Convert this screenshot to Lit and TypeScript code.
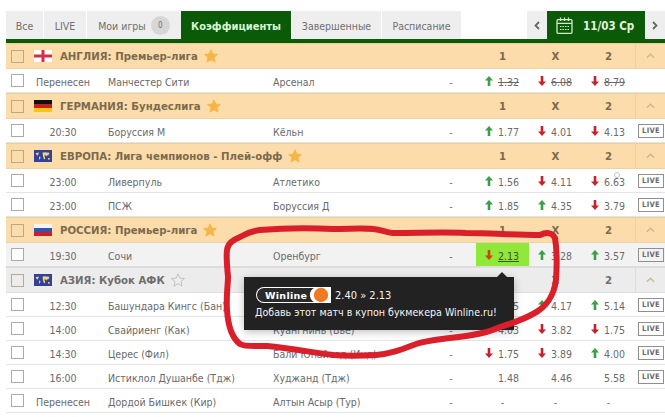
import { LitElement, html, css, svg } from "lit";
import { customElement } from "lit/decorators.js";

type Odd = [string, "u" | "d" | ""];
interface Row { kind: "h"; title: string; flag: string; grey?: boolean; emptyStar?: boolean }
interface Match { kind: "m"; time: string; home: string; away: string; dash: string; odds: [Odd, Odd, Odd]; live: boolean; strike?: boolean; grey?: boolean; hot?: boolean }

const rows: (Row | Match)[] = [
  { kind: "h", title: "АНГЛИЯ: Премьер-лига", flag: "en" },
  { kind: "m", time: "Перенесен", home: "Манчестер Сити", away: "Арсенал", dash: "-", odds: [["1.32", "u"], ["6.08", "d"], ["8.79", "d"]], live: false, strike: true },
  { kind: "h", title: "ГЕРМАНИЯ: Бундеслига", flag: "de" },
  { kind: "m", time: "20:30", home: "Боруссия М", away: "Кёльн", dash: "-", odds: [["1.77", "u"], ["4.01", "d"], ["4.13", "d"]], live: true },
  { kind: "h", title: "ЕВРОПА: Лига чемпионов - Плей-офф", flag: "eu" },
  { kind: "m", time: "23:00", home: "Ливерпуль", away: "Атлетико", dash: "-", odds: [["1.56", "u"], ["4.11", "d"], ["6.63", "d"]], live: true },
  { kind: "m", time: "23:00", home: "ПСЖ", away: "Боруссия Д", dash: "-", odds: [["1.85", "u"], ["4.35", "u"], ["3.79", "d"]], live: true },
  { kind: "h", title: "РОССИЯ: Премьер-лига", flag: "ru" },
  { kind: "m", time: "19:30", home: "Сочи", away: "Оренбург", dash: "-", odds: [["2.13", "d"], ["3.28", "u"], ["3.57", "u"]], live: true, grey: true, hot: true },
  { kind: "h", title: "АЗИЯ: Кубок АФК", flag: "eu", grey: true, emptyStar: true },
  { kind: "m", time: "12:30", home: "Башундара Кингс (Бан)", away: "", dash: "-", odds: [["1.75", "d"], ["4.17", "u"], ["5.14", "u"]], live: true },
  { kind: "m", time: "14:00", home: "Свайриенг (Как)", away: "Куангнинь (Вье)", dash: "-", odds: [["4.03", "d"], ["3.82", "d"], ["1.75", "d"]], live: true },
  { kind: "m", time: "14:30", home: "Церес (Фил)", away: "Бали Юнайтед (Инд)", dash: "-", odds: [["1.75", "d"], ["3.89", "d"], ["4.00", "u"]], live: true },
  { kind: "m", time: "16:00", home: "Истиклол Душанбе (Тдж)", away: "Худжанд (Тдж)", dash: "-", odds: [["1.48", ""], ["4.46", ""], ["5.58", ""]], live: true },
  { kind: "m", time: "Перенесен", home: "Дордой Бишкек (Кир)", away: "Алтын Асыр (Тур)", dash: "-", odds: [["-", ""], ["-", ""], ["-", ""]], live: false },
];

const flag = (f: string) => {
  if (f === "en") return svg`<svg class="flag" viewBox="0 0 18 12"><rect width="18" height="12" fill="#fff"/><rect x="7.5" width="3" height="12" fill="#d2304a"/><rect y="4.5" width="18" height="3" fill="#d2304a"/></svg>`;
  if (f === "de") return svg`<svg class="flag" viewBox="0 0 18 12"><rect width="18" height="4" fill="#111"/><rect y="4" width="18" height="4" fill="#c8201c"/><rect y="8" width="18" height="4" fill="#f6c616"/></svg>`;
  if (f === "ru") return svg`<svg class="flag" viewBox="0 0 18 12"><rect width="18" height="4" fill="#f4f4f6"/><rect y="4" width="18" height="4" fill="#3a52a8"/><rect y="8" width="18" height="4" fill="#c82030"/></svg>`;
  return svg`<svg class="flag" viewBox="0 0 18 12"><rect width="18" height="12" fill="#35409a"/><path d="M1.500 3.200l3.500-.7-.8 2 -1 1.300zM5 6.500l1.500.6-.7 3-.8-1.500zM8.500 2.800l1.500-.6 5.500.6-1 2.400-1.800.2-.4 1.200-.9-1.400-1 .2.800 3-1.200 1-1-3.200zM14 8l1.800.3-.3 1.400-1.500-.3z" fill="#e8d878"/></svg>`;
};

const star = (empty?: boolean) => svg`<svg class="star" viewBox="0 0 14 14"><path d="M7 .8l1.900 4.300 4.600.4-3.500 3 1.100 4.600L7 10.700l-4.100 2.400L4 8.500.5 5.500l4.600-.4z" fill=${empty ? "none" : "#f6b546"} stroke=${empty ? "#b8b8b8" : "#f6b546"} stroke-width=".8"/></svg>`;

const arrow = (d: string, hot: boolean) => d === "u"
  ? svg`<svg class="arr" viewBox="0 0 8 10"><path d="M4 0L8 4.500H5.300V10H2.700V4.500H0z" fill="#3a9f48"/></svg>`
  : svg`<svg class="arr" viewBox="0 0 8 10"><path d="M4 10L8 5.500H5.300V0H2.700V5.500H0z" fill=${hot ? "#d2400e" : "#c8202c"}/></svg>`;

const chevron = svg`<svg class="chev" viewBox="0 0 10 6"><path d="M1 5l4-4 4 4" fill="none" stroke="#c9b898" stroke-width="1.500"/></svg>`;

@customElement("app-root")
export class AppRoot extends LitElement {
  static styles = css`
    :host { display: block; position: relative; width: 665px; height: 417px; overflow: hidden; background: #fff; font-family: "DejaVu Sans Condensed", "DejaVu Sans", sans-serif; font-stretch: condensed; font-size: 10.5px; color: #6a6a6a; }
    .page { padding: 11px 0 0 6px; display: flex; flex-direction: column; }
    .tabs { display: flex; height: 28px; width: 659px; gap: 1px; }
    .tab { display: flex; align-items: center; justify-content: center; background: #eeeeee; font-size: 10.5px; color: #707070; padding-top: 2px; box-sizing: border-box; }
    .tab.on { background: #0b5a08; color: #d8f5d0; font-weight: 700; font-size: 11px; margin: 0 0 0 -1px; }
    .t1 { width: 37px; } .t2 { width: 42px; } .t3 { width: 94px; gap: 5px; } .t4 { width: 110px; } .t5 { width: 89px; } .t6 { width: 79px; }
    .count { width: 19px; height: 19px; border-radius: 50%; background: #d6d6d6; display: flex; align-items: center; justify-content: center; font-size: 8px; margin-top: -2px; }
    .spring { flex: 1; }
    .nav { width: 20px; background: #eeeeee; display: flex; align-items: center; justify-content: center; }
    .nav svg { width: 6px; height: 9px; }
    .date { width: 98px; margin: 0 -1px; background: #0b5a08; color: #e4f5de; font-weight: 700; font-size: 11.5px; display: flex; align-items: center; gap: 10px; padding-left: 9px; box-sizing: border-box; z-index: 1; }
    .date span { padding-top: 2px; }
    .date svg { width: 17px; height: 17px; }
    .rule { height: 4px; width: 659px; background: #0b5a08; }
    .row { display: grid; grid-template-columns: 24px 78px 165px 170px 16px 17px 53px 53px 53px 30px; align-items: center; height: 24px; box-sizing: border-box; border-bottom: 1px solid #e4e4e4; }
    .row.grey { background: #f2f2f2; border-bottom-color: #dcdcdc; }
    .head { display: flex; align-items: center; height: 26px; box-sizing: border-box; background: #fbdcaa; border-top: 1px solid #e8cfa0; border-bottom: 1px solid #ead2a6; font-weight: 700; color: #7c6a4e; font-size: 11.3px; }
    .head.grey { background: #ececec; border-color: #dddddd; color: #6e6e6e; }
    .head .cb { border-color: #b9a98c; background: transparent; }
    .head .cbcell { width: 28px; }
    .cbcell { display: flex; padding-left: 5px; box-sizing: border-box; }
    .cb { border: 1px solid #aaaaaa; box-sizing: content-box; background: #fff; width: 11px; height: 11px; }
    .flag { width: 18px; height: 12px; flex: none; }
    .title { margin-left: 8px; white-space: nowrap; }
    .star { width: 14px; height: 14px; margin-left: 6px; flex: none; }
    .hspace { flex: 1; }
    .hcol { width: 53px; text-align: center; }
    .hend { width: 30px; align-self: stretch; border-left: 1px solid #ead2a6; display: flex; align-items: center; justify-content: center; box-sizing: border-box; }
    .head.grey .hend { border-color: #dcdcdc; }
    .chev { width: 9px; height: 6px; }
    .time, .home, .away, .dash, .odd span { padding-top: 2px; }
    .time { text-align: center; padding-right: 12px; white-space: nowrap; }
    .home, .away { white-space: nowrap; overflow: hidden; }
    .dash { text-align: center; }
    .odd { display: flex; align-items: center; height: 23px; padding-left: 9px; gap: 5px; box-sizing: border-box; }
    .odd.plain { justify-content: center; padding: 0; }
    .odd.noarr { padding-left: 22px; }
    .odd.hot { background: #8fe83a; color: #3f4f2a; }
    .odd.hot span { text-decoration: underline; }
    .odd.strike span { text-decoration: line-through; }
    .arr { width: 8px; height: 10px; flex: none; }
    .live { margin-left: 3px; width: 26px; height: 14px; border: 1px solid #8f8f8f; box-sizing: border-box; font-size: 7.5px; font-weight: 700; color: #6a6a6a; display: flex; align-items: center; justify-content: center; letter-spacing: .3px; }
    .tip { position: absolute; left: 244px; top: 277px; width: 270px; height: 53px; background: #222222; color: #f4f4f4; box-shadow: 0 2px 8px rgba(0,0,0,.25); box-sizing: border-box; padding: 10px 0 0 11px; display: flex; flex-direction: column; gap: 3px; font-size: 10.6px; }
    .tip::before { content: ""; position: absolute; left: 253px; top: -5px; border: 5px solid transparent; border-top: 0; border-bottom-color: #222222; }
    .tipline { display: flex; align-items: center; gap: 4px; height: 16px; margin-left: 1px; font-size: 11px; }
    .tiptext { white-space: nowrap; }
    .logo { width: 75px; height: 16px; display: block; }
    .scribble { position: absolute; left: 0; top: 0; width: 665px; height: 417px; pointer-events: none; }
    .dot { position: absolute; left: 614px; top: 172px; width: 4px; height: 4px; border: 1px solid #c4c8d8; border-radius: 50%; }
    .logotext { font: 700 9.5px "DejaVu Sans", sans-serif; font-stretch: normal; letter-spacing: .3px; }
  `;

  render() {
    return html`
      <div class="page">
        <div class="tabs">
          <div class="tab t1">Все</div>
          <div class="tab t2">LIVE</div>
          <div class="tab t3">Мои игры <span class="count">0</span></div>
          <div class="tab t4 on">Коэффициенты</div>
          <div class="tab t5">Завершенные</div>
          <div class="tab t6">Расписание</div>
          <div class="spring"></div>
          <div class="nav"><svg viewBox="0 0 6 9"><path d="M5 1L1.500 4.500 5 8" fill="none" stroke="#666" stroke-width="1.800"/></svg></div>
          <div class="date">
            <svg viewBox="0 0 17 17" fill="none" stroke="#cdeccb" stroke-width="1.300"><rect x="1" y="2.700" width="15" height="13.600" rx="1"/><path d="M1 6.300h15M4.500.5v3.500M8.500.5v3.500M12.500.5v3.500"/><path d="M4 9.500h9M4 12.500h9" stroke-width="1.100" stroke-dasharray="1.500 1"/></svg>
            <span>11/03 Ср</span>
          </div>
          <div class="nav"><svg viewBox="0 0 6 9"><path d="M1 1l3.500 3.500L1 8" fill="none" stroke="#666" stroke-width="1.800"/></svg></div>
        </div>
        <div class="rule"></div>
        ${rows.map((r) => r.kind === "h" ? this.head(r) : this.match(r))}
      </div>
      <div class="dot"></div>
      <div class="tip">
        <div class="tipline">
          <svg class="logo" viewBox="0 0 75 16">
            <path d="M8 0H75V16H8A8 8 0 0 1 8 0Z" fill="#fff"/>
            <path d="M8 1H58A8 8 0 0 0 58 15H8A7 7 0 0 1 8 1Z" fill="#2a2a2a"/>
            <text x="9" y="11.500" class="logotext" fill="#fff">Winline</text>
            <circle cx="65" cy="8" r="7.200" fill="#f07a22"/>
          </svg>
          <span>2.40 » 2.13</span>
        </div>
        <div class="tiptext">Добавь этот матч в купон букмекера Winline.ru!</div>
      </div>
      <svg class="scribble" viewBox="0 0 665 417">
        <path d="M540 235C546 232 552 232 555 238C557 250 557 265 556 280C554 295 548 306 533 314C520 321 510 324 500 327C490 332 470 336 450 338C435 340 425 341 416 344C400 350 390 354 376 355C360 356 345 356 333 355C315 353 290 348 267 346C255 346 245 347 240 344C232 338 228 325 227 310C226 295 228 285 228 277C227 265 226 258 227 250C228 243 233 240 240 237C247 233 252 231 260 230C285 228 310 228 333 229C350 229 362 228 373 229C382 230 385 232 393 233C420 233 445 232 466 233C490 233 515 235 540 235" fill="none" stroke="#d81f2a" stroke-width="6" stroke-linecap="round"/>
      </svg>
    `;
  }

  head(r: Row) {
    return html`<div class="head ${r.grey ? "grey" : ""}">
      <div class="cbcell"><div class="cb"></div></div>
      ${flag(r.flag)}
      <span class="title">${r.title}</span>
      ${star(r.emptyStar)}
      <div class="hspace"></div>
      <div class="hcol">1</div><div class="hcol">X</div><div class="hcol">2</div>
      <div class="hend">${chevron}</div>
    </div>`;
  }

  match(m: Match) {
    return html`<div class="row ${m.grey ? "grey" : ""}">
      <div class="cbcell"><div class="cb"></div></div>
      <div class="time">${m.time}</div>
      <div class="home">${m.home}</div>
      <div class="away">${m.away}</div>
      <div class="dash">${m.dash}</div>
      <div></div>
      ${m.odds.map((o, i) => {
        const hot = !!m.hot && i === 0;
        const cls = ["odd"];
        if (o[0] === "-") cls.push("plain");
        else if (!o[1]) cls.push("noarr");
        if (hot) cls.push("hot");
        if (m.strike) cls.push("strike");
        return html`<div class=${cls.join(" ")}>${o[1] ? arrow(o[1], hot) : ""}<span>${o[0]}</span></div>`;
      })}
      <div>${m.live ? html`<div class="live">LIVE</div>` : ""}</div>
    </div>`;
  }
}
